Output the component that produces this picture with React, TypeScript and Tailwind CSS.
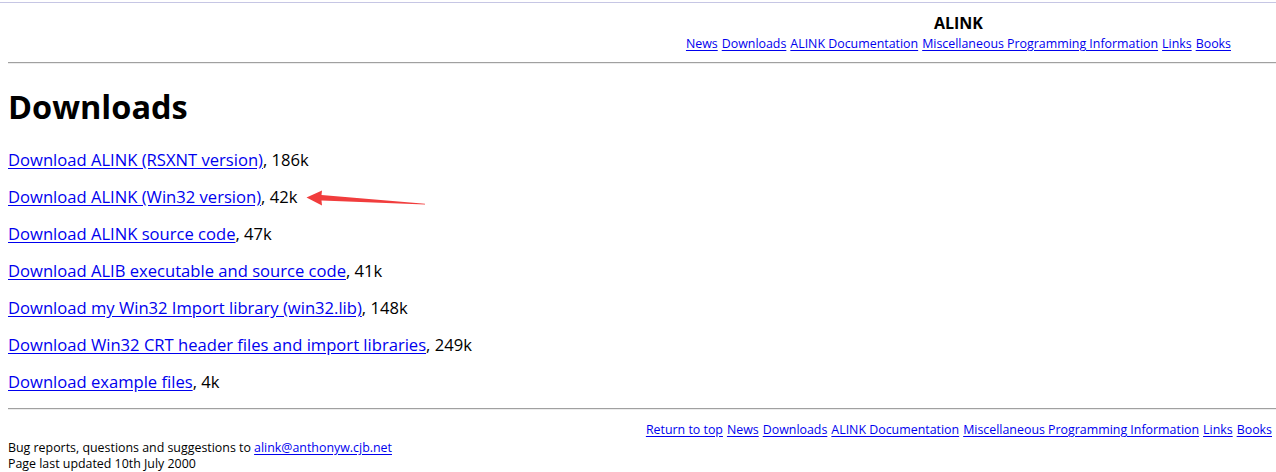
const navLinks = [
  "News",
  "Downloads",
  "ALINK Documentation",
  "Miscellaneous Programming Information",
  "Links",
  "Books",
];

const downloads = [
  { label: "Download ALINK (RSXNT version)", size: "186k" },
  { label: "Download ALINK (Win32 version)", size: "42k", marked: true },
  { label: "Download ALINK source code", size: "47k" },
  { label: "Download ALIB executable and source code", size: "41k" },
  { label: "Download my Win32 Import library (win32.lib)", size: "148k" },
  { label: "Download Win32 CRT header files and import libraries", size: "249k" },
  { label: "Download example files", size: "4k" },
];

const Link = ({ children }: { children: React.ReactNode }) => (
  <a href="#" className="text-[#0000ee] underline underline-offset-[2px]">
    {children}
  </a>
);

// red annotation arrow pointing left
const Arrow = () => (
  <svg
    className="pointer-events-none absolute left-[292px] top-[-9px]"
    width="130"
    height="24"
    viewBox="0 0 130 24"
  >
    <polygon
      points="6.5,9.5 22,2.5 21.5,7 125,15.8 125,16.6 21.5,12.5 22,17.5"
      fill="#f13d3d"
    />
  </svg>
);

const Rule = () => (
  <div className="ml-2 border-t border-b border-t-[#a0a0a0] border-b-[#ececec]" />
);

export default function App() {
  return (
    <div className="min-h-[472px] bg-white font-['Open_Sans',sans-serif] text-black">
      <div className="h-[2px]" />
      <div className="h-px bg-[#c6c6e4]" />

      <div className="flex justify-end pr-[45px] pt-[10px]">
        <div className="flex flex-col items-center">
          <div className="text-[16px] font-bold leading-[20px]">ALINK</div>
          <div className="mt-[2px] flex gap-[4px] text-[12.4px] leading-[18px]">
            {navLinks.map((n) => (
              <Link key={n}>{n}</Link>
            ))}
          </div>
        </div>
      </div>

      <div className="mt-[9px]">
        <Rule />
      </div>

      <div className="px-2">
        <h1 className="mt-[22px] text-[32.5px] font-bold leading-[42px]">Downloads</h1>
        <div className="mt-[21px] flex flex-col gap-[16px] text-[16.6px] leading-[21px]">
          {downloads.map((d) => (
            <div key={d.label} className="relative">
              <Link>{d.label}</Link>, {d.size}
              {d.marked && (
                <span className="absolute left-0 top-1/2">
                  <Arrow />
                </span>
              )}
            </div>
          ))}
        </div>
      </div>

      <div className="mt-[16px]">
        <Rule />
      </div>

      <div className="flex justify-end gap-[4px] pr-[4px] pt-[11px] text-[12.4px] leading-[18px]">
        <Link>Return to top</Link>
        {navLinks.map((n) => (
          <Link key={n}>{n}</Link>
        ))}
      </div>

      <div className="px-2 pt-[1px] text-[12.4px] leading-[16px]">
        <div>
          Bug reports, questions and suggestions to <Link>alink@anthonyw.cjb.net</Link>
        </div>
        <div>Page last updated 10th July 2000</div>
      </div>
    </div>
  );
}
